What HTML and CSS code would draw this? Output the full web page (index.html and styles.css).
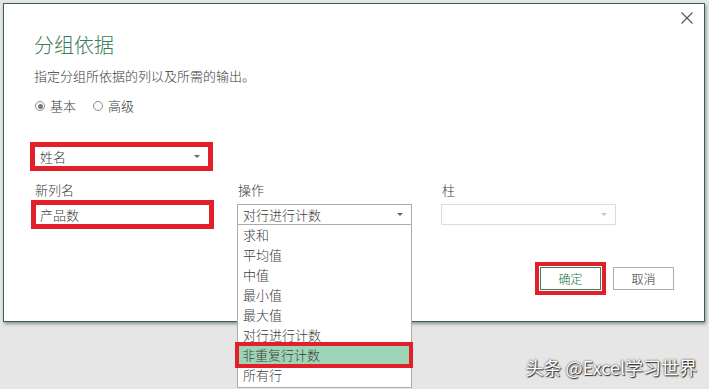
FILE: index.html
```html
<!DOCTYPE html>
<html lang="zh-CN">
<head>
    <meta charset="UTF-8">
    <meta name="viewport" content="width=device-width, initial-scale=1.0">
    <title>分组依据</title>
    <link rel="stylesheet" href="styles.css">
</head>
<body>
    <div class="dialog">
        <button class="close" aria-label="关闭">
            <svg width="12" height="12" viewBox="0 0 12 12"><path d="M0.5 0.5 L11.5 11.5 M11.5 0.5 L0.5 11.5" stroke="#555" stroke-width="1.1" fill="none"/></svg>
        </button>

        <div class="title">分组依据</div>
        <div class="subtitle">指定分组所依据的列以及所需的输出。</div>

        <div class="radios">
            <label class="radio"><span class="dot checked"></span>基本</label>
            <label class="radio"><span class="dot"></span>高级</label>
        </div>

        <div class="select groupby mark">
            <span>姓名</span><span class="caret"></span>
        </div>

        <!-- New column row -->
        <div class="fields">
            <div class="field col-name">
                <div class="label">新列名</div>
                <div class="input mark">产品数</div>
            </div>
            <div class="field col-op">
                <div class="label">操作</div>
                <div class="select">
                    <span>对行进行计数</span><span class="caret"></span>
                </div>
                <ul class="menu">
                    <li>求和</li>
                    <li>平均值</li>
                    <li>中值</li>
                    <li>最小值</li>
                    <li>最大值</li>
                    <li>对行进行计数</li>
                    <li class="active mark">非重复行计数</li>
                    <li>所有行</li>
                </ul>
            </div>
            <div class="field col-col">
                <div class="label">柱</div>
                <div class="select disabled">
                    <span></span><span class="caret"></span>
                </div>
            </div>
        </div>

        <div class="buttons">
            <button class="btn primary mark">确定</button>
            <button class="btn">取消</button>
        </div>
    </div>

    <div class="watermark">头条 @Excel学习世界</div>
</body>
</html>
```

FILE: styles.css
```css
body {
    margin: 0;
    padding: 0;
    background: #e6e6e6;
    font-family: "Noto Sans CJK SC", "Microsoft YaHei", sans-serif;
    font-weight: 300;
    color: #3a3a3a;
    width: 709px;
    height: 389px;
    overflow: hidden;
    position: relative;
}

.dialog {
    position: relative;
    box-sizing: border-box;
    width: 702px;
    height: 319px;
    margin: 3px 0 0 3px;
    padding: 29px 30px 0 30px;
    background: #fff;
    border: 1px solid #3f5f50;
    box-shadow: 1px 2px 3px rgba(60, 90, 75, 0.55);
}

.close {
    position: absolute;
    top: 7px;
    right: 10px;
    width: 14px;
    height: 14px;
    padding: 1px;
    border: none;
    background: none;
}

.title {
    font-size: 20px;
    line-height: 24px;
    color: #3b7a5b;
}

.subtitle {
    margin-top: 10px;
    font-size: 13px;
    line-height: 18px;
}

.radios {
    margin-top: 12px;
    display: flex;
    gap: 16px;
    font-size: 13px;
    line-height: 18px;
}

.radio {
    display: flex;
    align-items: center;
    gap: 5px;
}

.dot {
    box-sizing: border-box;
    width: 10px;
    height: 10px;
    margin-left: 1px;
    border: 1px solid #8a8a8a;
    border-radius: 50%;
    position: relative;
}

.dot.checked::after {
    content: "";
    position: absolute;
    left: 1.5px;
    top: 1.5px;
    width: 5px;
    height: 5px;
    border-radius: 50%;
    background: #777;
}

/* Fake select boxes */
.select, .input {
    box-sizing: border-box;
    height: 21px;
    border: 1px solid #ababab;
    display: flex;
    align-items: center;
    justify-content: space-between;
    padding: 0 8px 0 5px;
    font-size: 13px;
    line-height: 19px;
    background: #fff;
}

.caret {
    width: 0;
    height: 0;
    border-left: 3px solid transparent;
    border-right: 3px solid transparent;
    border-top: 3px solid #666;
}

.select.disabled {
    border-color: #dcdcdc;
}

.select.disabled .caret {
    border-top-color: #c8c8c8;
}

.groupby {
    width: 175px;
    margin-top: 31px;
    padding-left: 5px;
}

/* Red annotation boxes */
.mark {
    outline: 4px solid #e0202b;
}

.groupby.mark {
    border-color: #e0202b;
}

.fields {
    display: flex;
    margin-top: 14px;
}

.field {
    position: relative;
    width: 175px;
}

.col-name {
    width: 179px;
    margin-right: 24px;
}

.col-op {
    margin-right: 29px;
}

.label {
    font-size: 13px;
    line-height: 18px;
    padding-left: 1px;
    margin-bottom: 5px;
}

.input {
    width: 175px;
    margin-left: 1px;
    padding-left: 4px;
    border-color: #e0202b;
}

.menu {
    position: absolute;
    top: 44px;
    left: 0;
    width: 175px;
    box-sizing: border-box;
    margin: 0;
    padding: 0 0 2px 0;
    list-style: none;
    background: #fff;
    border: 1px solid #ababab;
    border-top: none;
    z-index: 2;
}

.menu li {
    height: 20px;
    line-height: 20px;
    padding-left: 5px;
    font-size: 13px;
}

.menu li.active {
    background: #9fd5b7;
    outline-offset: -1px;
    margin: 0 1px 0 0;
    padding-left: 4px;
}

.buttons {
    display: flex;
    justify-content: flex-end;
    gap: 12px;
    margin-top: 42px;
}

.btn {
    width: 61px;
    height: 23px;
    padding: 0;
    border: 1px solid #adadad;
    background: #fff;
    font-family: "Noto Sans CJK SC", "Microsoft YaHei", sans-serif;
    font-weight: 300;
    font-size: 12px;
    color: #333;
}

.btn.primary {
    border-color: #3f7f5a;
    color: #217346;
    outline-offset: 1px;
}

.watermark {
    position: absolute;
    right: 12px;
    top: 356px;
    font-size: 18px;
    line-height: 22px;
    font-weight: 400;
    color: #fff;
    text-shadow: 0 0 2px #222, 1px 1px 1px #333;
}
```
